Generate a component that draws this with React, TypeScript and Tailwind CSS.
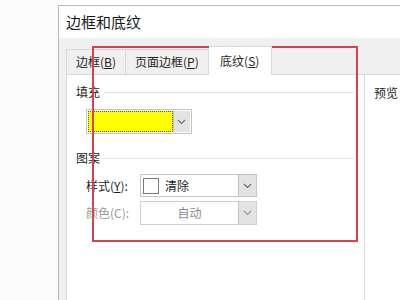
import React from "react";

const font = { fontFamily: '"Noto Sans CJK SC", "Microsoft YaHei", sans-serif' };

const Chevron = ({ dim }: { dim?: boolean }) => (
  <svg width="9" height="6" viewBox="0 0 9 6">
    <polyline points="1,1 4.5,4.5 8,1" fill="none" stroke={dim ? "#9a9a9a" : "#6a6a6a"} strokeWidth="1.1" />
  </svg>
);

const DropButton = ({ dim }: { dim?: boolean }) => (
  <div className="w-[18px] self-stretch flex items-center justify-center bg-[#e3e3e3] border-l border-[#c4c4c4]">
    <Chevron dim={dim} />
  </div>
);

const GroupHeader = ({ label }: { label: string }) => (
  <div className="flex items-center h-[16px]">
    <span className="text-[12px] leading-none text-[#1e1e1e]">{label}</span>
    <div className="flex-1 h-px bg-[#e3e3e3] ml-[4px] mr-[10px]" />
  </div>
);

export default function App() {
  return (
    <div className="relative w-[400px] h-[300px] overflow-hidden bg-white flex" style={font}>
      <div className="w-[58px] shrink-0 bg-[#fbfbfb]" />
      <div className="flex-1 flex flex-col mt-[5px] border-l border-t border-[#b9b9b9]">
        {/* title bar */}
        <div className="h-[32px] bg-white flex items-center pl-[7px] text-[15px] text-[#1a1a1a]">
          边框和底纹
        </div>
        <div className="flex-1 flex flex-col bg-[#f0f0f0]">
          {/* tabs */}
          <div className="flex items-end h-[36px] pl-[7px]">
            <div className="h-[25px] px-[9px] flex items-center border border-b-0 border-[#d9d9d9] text-[12px] text-[#1e1e1e]">
              边框(<span className="underline">B</span>)
            </div>
            <div className="h-[25px] px-[9px] flex items-center border border-l-0 border-b-0 border-[#d9d9d9] text-[12px] text-[#1e1e1e]">
              页面边框(<span className="underline">P</span>)
            </div>
            <div className="relative z-10 -mb-px h-[29px] w-[63px] flex items-center justify-center bg-white border border-l-0 border-b-0 border-[#d9d9d9] text-[12px] text-[#1e1e1e]">
              底纹(<span className="underline">S</span>)
            </div>
          </div>
          {/* panel */}
          <div className="flex-1 flex pl-[7px]">
            <div className="w-[299px] bg-white border-l border-t border-r border-[#d9d9d9] flex flex-col pl-[9px] pt-[9px]">
              <GroupHeader label="填充" />
              <div className="ml-[10px] mt-[9px] w-[106px] h-[25px] flex border border-[#c4c4c4] p-px">
                <div className="w-[87px] bg-[#ffff00] border border-dotted border-[#555]" />
                <DropButton />
              </div>
              <div className="mt-[16px]">
                <GroupHeader label="图案" />
              </div>
              <div className="flex items-center mt-[8px] h-[23px]">
                <span className="w-[64px] pl-[10px] text-[12px] text-[#1e1e1e]">
                  样式(<span className="underline">Y</span>):
                </span>
                <div className="w-[117px] h-[23px] flex items-center border border-[#c4c4c4] bg-white">
                  <div className="ml-[2px] w-[16px] h-[16px] border border-[#7a7a7a] bg-white" />
                  <span className="ml-[6px] flex-1 text-[12px] text-[#1e1e1e]">清除</span>
                  <DropButton />
                </div>
              </div>
              <div className="flex items-center mt-[4px] h-[24px]">
                <span className="w-[64px] pl-[10px] text-[12px] text-[#9a9a9a]">颜色(C):</span>
                <div className="w-[117px] h-[24px] flex items-center border border-[#cfcfcf] bg-white">
                  <span className="flex-1 text-center text-[12px] text-[#8a8a8a]">自动</span>
                  <DropButton dim />
                </div>
              </div>
            </div>
            <div className="flex-1 flex items-start bg-white border-t border-[#d9d9d9] pl-[9px] pt-[12px]">
              <span className="text-[12px] leading-none text-[#1e1e1e]">预览</span>
            </div>
          </div>
        </div>
      </div>
      {/* red highlight */}
      <div className="absolute left-[92px] top-[46px] w-[266px] h-[196px] border-2 border-[#d7434e]" />
    </div>
  );
}
